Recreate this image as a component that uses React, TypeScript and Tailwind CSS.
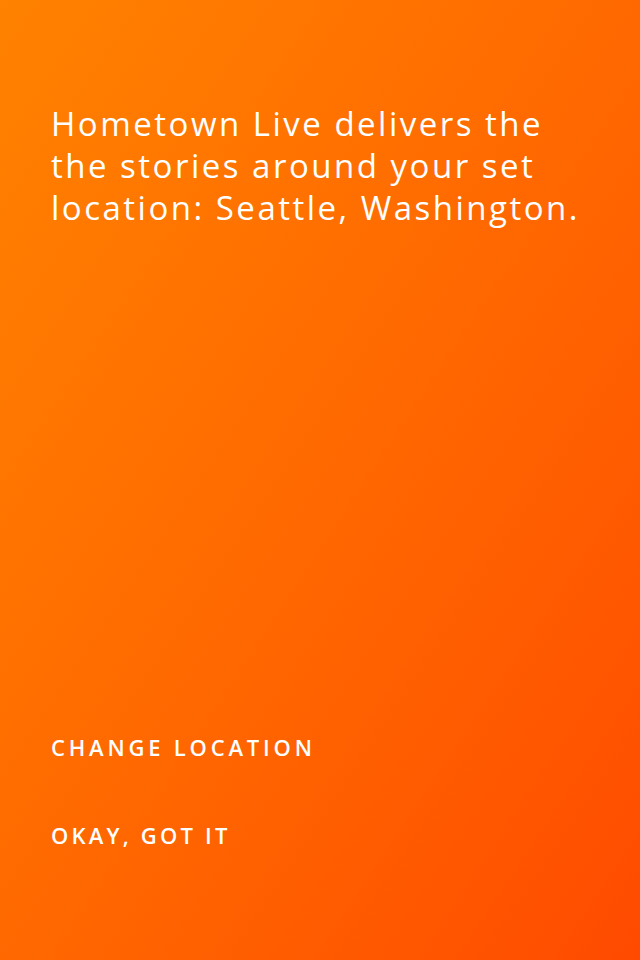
export default function App() {
  return (
    <div
      className="w-[640px] h-[960px] bg-linear-to-br from-[#ff8200] to-[#ff4a00] text-white flex flex-col px-[51px]"
      style={{ fontFamily: "'Open Sans', Lato, sans-serif" }}
    >
      <p className="mt-[103px] text-[33px] leading-[42px] tracking-[2.5px] whitespace-nowrap">
        Hometown Live delivers the
        <br />
        the stories around your set
        <br />
        location: Seattle, Washington.
      </p>
      <div className="flex-1" />
      <button className="self-start text-left text-[22px] font-semibold tracking-[3.8px] leading-[28px] mb-[60px]">
        CHANGE LOCATION
      </button>
      <button className="self-start text-left text-[22px] font-semibold tracking-[3.2px] leading-[28px] mb-[111px]">
        OKAY, GOT IT
      </button>
    </div>
  );
}
